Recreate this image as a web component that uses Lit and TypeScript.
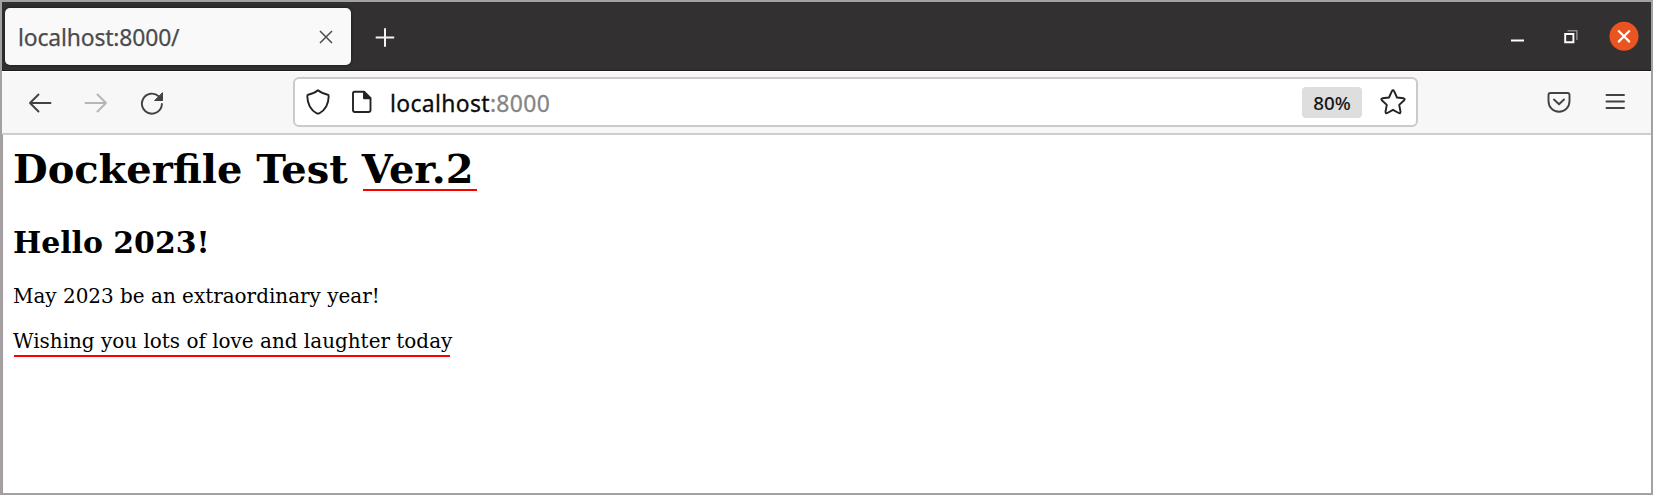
import { LitElement, html, css } from "lit";
import { customElement } from "lit/decorators.js";

@customElement("browser-tabs")
class BrowserTabs extends LitElement {
  static styles = css`
    :host { display: flex; height: 69px; box-sizing: border-box; background: #323031; border-bottom: 1px solid #1b191a; align-items: flex-start; padding: 6px 12px 0 3px; }
    .tab { display: flex; align-items: center; justify-content: space-between; width: 346px; height: 57px; box-sizing: border-box; padding: 0 18px 0 13px; background: #f9f9fa; border-radius: 5px; color: #4b4b4d; box-shadow: 0 0 3px #151515; }
    .title { font: 22.9px/30px "Noto Sans", "Open Sans", sans-serif; letter-spacing: -0.15px; white-space: pre; padding-top: 3px; -webkit-text-stroke: 0.25px; }
    svg { display: block; fill: none; }
    .plus { margin: 19px 0 0 24px; }
    .controls { display: flex; align-items: center; margin: 13px 0 0 auto; }
    .min { margin-right: 40px; }
    .restore { margin-right: 31px; }
  `;
  render() {
    return html`
      <div class="tab">
        <span class="title">localhost:8000/</span>
        <svg width="14" height="14" viewBox="0 0 14 14" stroke="#4b4b4d" stroke-width="1.5"><path d="M1 1 13 13M13 1 1 13" /></svg>
      </div>
      <svg class="plus" width="20" height="20" viewBox="0 0 20 20" stroke="#f3f3f3" stroke-width="2"><path d="M.7 10.5H19.2M10 1.2V19.8" /></svg>
      <div class="controls">
        <svg class="min" width="13" height="30" viewBox="0 0 13 30" stroke="#fff" stroke-width="2"><path d="M0 19.5H13" /></svg>
        <svg class="restore" width="14" height="30" viewBox="0 0 14 30"><path d="M3.5 9.8H12.9V19" stroke="#8c8a8b" stroke-width="1.5" /><path d="M1.2 13H9.4V21.2H1.2Z" stroke="#fff" stroke-width="1.9" /></svg>
        <svg width="30" height="30" viewBox="0 0 30 30"><circle cx="15" cy="15.3" r="14.5" fill="#e95420" /><path d="M9.2 9.5 20.8 21.1M20.8 9.5 9.2 21.1" stroke="#fff" stroke-width="2.2" /></svg>
      </div>
    `;
  }
}

@customElement("browser-toolbar")
class BrowserToolbar extends LitElement {
  static styles = css`
    :host { display: flex; align-items: flex-start; height: 64px; box-sizing: border-box; background: #f7f7f7; border-top: 1px solid #fff; border-bottom: 2px solid #ceced0; padding: 5px 24px 0 26px; }
    svg { display: block; fill: none; stroke: #424244; stroke-width: 1.9; stroke-linecap: round; stroke-linejoin: round; flex: none; }
    .nav { display: flex; gap: 32px; padding-top: 14px; width: 265px; }
    .disabled { stroke: #b5b5b7; }
    .address { display: flex; align-items: center; box-sizing: border-box; width: 1125px; height: 50px; background: #fff; border: 2px solid #cacaca; border-radius: 6px; padding: 0 10px 0 11px; }
    .address svg { stroke: #232325; }
    .page { margin-left: 20px; }
    .url { margin-left: 16px; padding-top: 3px; font: 22.9px/30px "Noto Sans", "Open Sans", sans-serif; letter-spacing: 0.35px; color: #0c0c0d; -webkit-text-stroke: 0.3px; }
    .port { color: #858585; }
    .zoom { margin-left: auto; width: 60px; height: 31px; border-radius: 4px; background: #dedede; color: #151515; text-align: center; font: 500 18.8px/33px "Noto Sans", "Open Sans", sans-serif; margin-right: 18px; }
    .actions { display: flex; gap: 32px; margin-left: auto; padding-top: 14px; }
  `;
  render() {
    return html`
      <div class="nav">
        <svg width="24" height="24" viewBox="0 0 24 24"><path d="M22.5 12H2M10.5 3.5 2 12 10.5 20.5" /></svg>
        <svg class="disabled" width="24" height="24" viewBox="0 0 24 24"><path d="M1.5 12H22M13.5 3.5 22 12 13.5 20.5" /></svg>
        <svg width="24" height="24" viewBox="0 0 24 24"><path d="M21.9 13A10 10 0 1 1 18.8 5.4" /><path d="M22.5 2V9.5H15Z" fill="#424244" stroke-width="1" /></svg>
      </div>
      <div class="address">
        <svg width="24" height="26" viewBox="0 0 24 26"><path d="M12 1.3C9.5 3.5 5.5 5 2.2 5.7Q1.3 6 1.3 7.2C1.5 15.5 5 21 10.5 24.2Q12 25 13.5 24.2C19 21 22.5 15.5 22.7 7.2Q22.7 6 21.8 5.7C18.5 5 14.5 3.5 12 1.3Z" /></svg>
        <svg class="page" width="24" height="24" viewBox="0 0 24 24"><path d="M4.5 1.8H14L20.5 8.2V20Q20.5 22 18.5 22H5Q3 22 3 20V3.5Q3 1.8 4.5 1.8Z" /><path d="M14 2V8.2H20.3Z" fill="#232325" /></svg>
        <span class="url">localhost<span class="port">:8000</span></span>
        <span class="zoom">80%</span>
        <svg width="26" height="26" viewBox="0 0 26 26"><path d="M11.9 2.2Q13 .4 14.1 2.2L17 8.5 23.6 9.3Q25.4 9.8 24.2 11.2L19.2 15.9 20.5 22.8Q20.5 24.8 18.7 24L13 20.8 7.3 24Q5.5 24.8 5.5 22.8L6.8 15.9 1.8 11.2Q.6 9.8 2.4 9.3L9 8.5Z" /></svg>
      </div>
      <div class="actions">
        <svg width="24" height="24" viewBox="0 0 24 24"><path d="M3.5 2H20.5Q22.5 2 22.5 4V10C22.5 16 18 20.8 12 20.8S1.5 16 1.5 10V4Q1.5 2 3.5 2ZM7 8.5 12 13.2 17 8.5" /></svg>
        <svg width="24" height="24" viewBox="0 0 24 24"><path d="M3.5 4H21M3.5 10.5H21M3.5 17H21" /></svg>
      </div>
    `;
  }
}

@customElement("app-root")
class AppRoot extends LitElement {
  static styles = css`
    :host { display: block; width: 1653px; height: 495px; box-sizing: border-box; border: 2px solid #a2a2a2; background: #fff; overflow: hidden; }
    .content { border-left: 1px solid #a4959e; box-sizing: border-box; height: 358px; padding: 9px 0 0 10px; color: #000; font-family: "DejaVu Serif", serif; }
    h1, h2, p { margin: 0; white-space: nowrap; }
    h1 { font-size: 39.95px; line-height: 50px; height: 50px; }
    h2 { font-size: 29.9px; line-height: 40px; height: 40px; margin-top: 29px; }
    p { font-size: 19.97px; line-height: 26px; height: 26px; margin-top: 19px; }
    h2 + p { margin-top: 20px; }
    .mark { position: relative; }
    .mark::after { content: ""; position: absolute; height: 2px; background: #f00; }
    .version::after { left: 1px; right: -4px; bottom: 1px; }
    .wish::after { left: 1px; right: 2px; bottom: -4px; }
  `;
  render() {
    return html`
      <browser-tabs></browser-tabs>
      <browser-toolbar></browser-toolbar>
      <div class="content">
        <h1>Dockerfile Test <span class="mark version">Ver.2</span></h1>
        <h2>Hello 2023!</h2>
        <p>May 2023 be an extraordinary year!</p>
        <p><span class="mark wish">Wishing you lots of love and laughter today</span></p>
      </div>
    `;
  }
}
